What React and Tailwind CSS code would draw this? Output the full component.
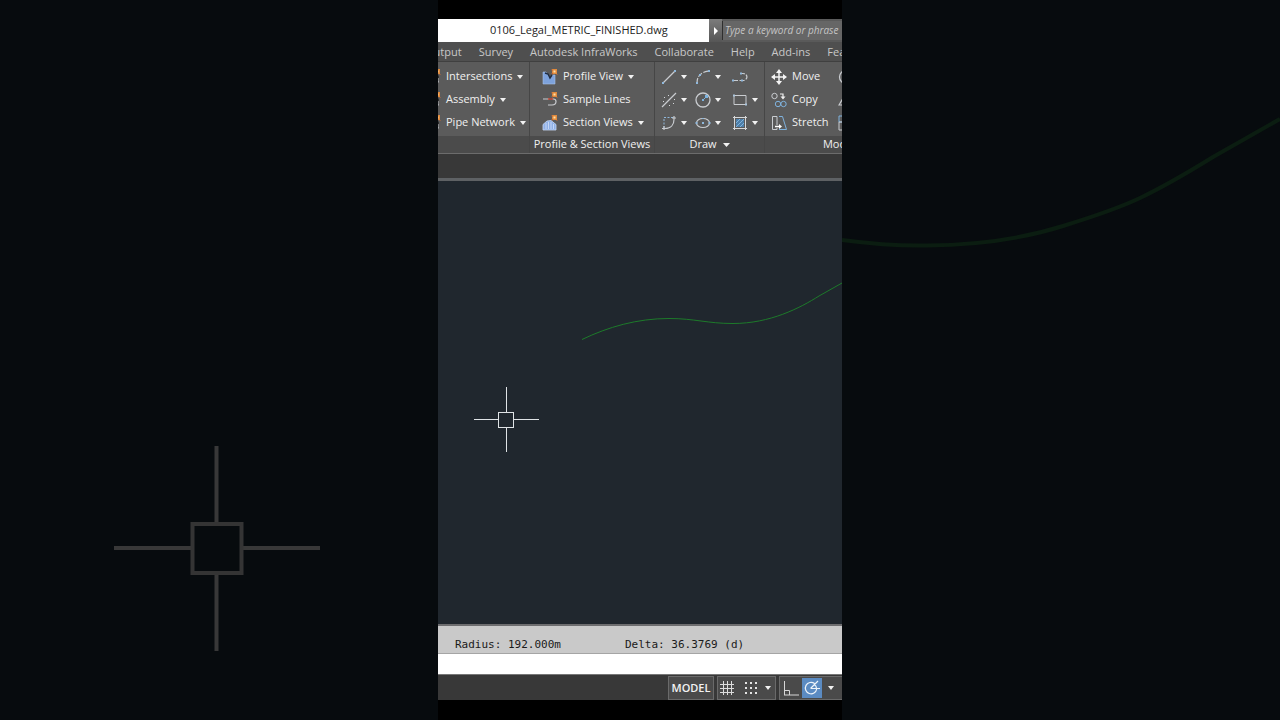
/**
 * Civil 3D ribbon and drawing area, shown as a portrait strip
 * over a dimmed, enlarged backdrop of the same drawing.
 */

import React from 'react';

const TABS = ['Output', 'Survey', 'Autodesk InfraWorks', 'Collaborate', 'Help', 'Add-ins', 'Featured Apps'];

function Caret({ className = 'w-1.5 h-1' }) {
  return (
    <svg viewBox="0 0 6 4" preserveAspectRatio="none" className={`shrink-0 ${className}`} aria-hidden="true">
      <path d="M0 0h6L3 4z" fill="#f2f2f2" />
    </svg>
  );
}

function Icon({ children, className = '' }) {
  return (
    <svg viewBox="0 0 16 16" className={`size-4 shrink-0 ${className}`} fill="none" stroke="#c9ccd0" aria-hidden="true">
      {children}
    </svg>
  );
}

// Orange "new object" spark in the corner of the create icons
function Spark() {
  return (
    <g stroke="none">
      <rect x="10" y="0" width="5" height="5" fill="#e08a3c" />
      <rect x="11.5" y="1.5" width="2" height="2" fill="#ffe0a8" />
      <path d="M9 4l2 0 0 2zM9 0l2 1-1 1zM15 5l1 1-2 0z" fill="#b9683a" />
    </g>
  );
}

const icons = {
  create: (
    <>
      <path d="M6 8h8M12 8v6" stroke="#2c2c2c" strokeWidth="3" />
      <path d="M6 13h8M13 9v4" />
      <Spark />
    </>
  ),
  profileView: (
    <>
      <path d="M1 3v12h12V6h-2L8 9 4 3z" fill="#7da2dc" stroke="#a9c2ea" strokeWidth=".6" />
      <path d="M3 4l3 1 2 4 2-3" stroke="#1f2b40" strokeWidth="1.400" />
      <Spark />
    </>
  ),
  sampleLines: (
    <>
      <path d="M1 7h6M6 13h4c3 0 4-2 4-3.500S13 7 11.500 7H10" strokeWidth="1.200" />
      <path d="M6 7h5" stroke="#c44a38" strokeWidth="1.500" />
      <Spark />
    </>
  ),
  sectionViews: (
    <>
      <path d="M1 15V9.500L5 6l4-.5 5 4V15z" fill="#8fb0e6" stroke="#c6d8f5" strokeWidth=".8" />
      <path d="M4 8v6M6.500 7v7M9 7v7M11.500 9v5" stroke="#dde8fa" strokeWidth=".7" />
      <Spark />
    </>
  ),
  line: (
    <>
      <path d="M2 14L14 2" strokeWidth="1.200" />
      <path d="M1 13h2v2H1zM13 1h2v2h-2z" fill="#8fb8dc" stroke="none" />
    </>
  ),
  arc: (
    <>
      <path d="M2 14C2 7 6 3 14 2" strokeWidth="1.200" strokeDasharray="5 1.500" />
      <path d="M1 13h2v2H1zM4 5h2v2H4zM13 1h2v2h-2z" fill="#8fb8dc" stroke="none" />
    </>
  ),
  polyline: (
    <>
      <path d="M1 11.500h10c5 0 5-7 0-7H9" strokeWidth="1.200" strokeDasharray="5 1.500" />
      <path d="M0 10.500h2v2H0zM9 10.500h2v2H9zM8 3.500h2v2H8z" fill="#8fb8dc" stroke="none" />
    </>
  ),
  xline: (
    <>
      <path d="M1 15L15 1" strokeWidth="1.200" />
      <path d="M3 5h1v1H3zM7 3h1v1H7zM2 9h1v1H2zM8 13h1v1H8zM12 11h1v1h-1zM13 7h1v1h-1z" fill="#d5d8dc" stroke="none" />
    </>
  ),
  circle: (
    <>
      <circle cx="8" cy="8" r="7" strokeWidth="1.300" />
      <path d="M8 8l4-4" stroke="#7db4e0" />
      <path d="M7 7h2v2H7zM10 3h3v3h-3z" fill="#7db4e0" stroke="none" />
    </>
  ),
  rectangle: (
    <>
      <path d="M2 3.500h12v9H2z" />
      <path d="M1 2.500h2v2H1zM13 11.500h2v2h-2z" fill="#a9c4dc" stroke="none" />
    </>
  ),
  spline: (
    <>
      <path d="M3 13V2.500h10" stroke="#8fb8dc" strokeDasharray="2 1.500" />
      <path d="M1 13.500h3c6 0 9-4 9-9V1M3 11v4M11 3h4" strokeWidth="1.200" />
    </>
  ),
  ellipse: (
    <>
      <ellipse cx="8" cy="8" rx="6.500" ry="4.500" strokeWidth="1.200" />
      <path d="M7 7h2v2H7zM0.500 7h2v2h-2zM13.500 7h2v2h-2zM7 3h2v1H7z" fill="#8fb8dc" stroke="none" />
    </>
  ),
  hatch: (
    <>
      <path d="M4 4h8v8H4z" fill="#4d7ea8" stroke="none" />
      <path d="M4 8l4-4M4 12l8-8M8 12l4-4" stroke="#8fc0ea" strokeWidth=".8" />
      <path d="M2.500 1v14M13.500 1v14M1 2.500h14M1 13.500h14" stroke="#d6d8da" />
    </>
  ),
  move: (
    <>
      <path d="M8 3v10M3 8h10" stroke="#f5f5f5" strokeWidth="1.500" />
      <path d="M8 0l3 4H5zM8 16l3-4H5zM0 8l4-3v6zM16 8l-4-3v6z" fill="#f5f5f5" stroke="none" />
    </>
  ),
  copy: (
    <>
      <circle cx="3.500" cy="4" r="2.700" />
      <path d="M9 2h3v3" stroke="#f0f0f0" strokeWidth="1.200" />
      <path d="M9.500 4.500h5L12 7.500z" fill="#f0f0f0" stroke="none" />
      <circle cx="7" cy="12" r="2.700" stroke="#7fb2dd" />
      <circle cx="12.500" cy="12" r="2.700" stroke="#7fb2dd" />
    </>
  ),
  stretch: (
    <>
      <path d="M6 10V1.500H1.500v13H6V13" />
      <path d="M8 1.500h3.500l4 13H8" stroke="#7fb2dd" />
      <path d="M4 11.500h5" stroke="#fff" strokeWidth="1.500" />
      <path d="M8 9l3 2.500L8 14z" fill="#fff" stroke="none" />
    </>
  ),
  rotate: <circle cx="8" cy="8" r="6.500" strokeWidth="1.300" />,
  mirror: <path d="M1 13L7 3v10z" strokeWidth="1.200" />,
  scale: (
    <>
      <path d="M1 1h12v6H1z" stroke="#7fb2dd" />
      <path d="M1 7h7v8H1z" />
    </>
  ),
};

const createRows = ['Intersections', 'Assembly', 'Pipe Network'];

const viewRows = [
  { icon: 'profileView', label: 'Profile View', menu: true },
  { icon: 'sampleLines', label: 'Sample Lines' },
  { icon: 'sectionViews', label: 'Section Views', menu: true },
];

const drawTools = [
  { icon: 'line', label: 'Line', menu: true },
  { icon: 'arc', label: 'Arc', menu: true },
  { icon: 'polyline', label: 'Polyline' },
  { icon: 'xline', label: 'Construction line', menu: true },
  { icon: 'circle', label: 'Circle', menu: true },
  { icon: 'rectangle', label: 'Rectangle', menu: true },
  { icon: 'spline', label: 'Spline', menu: true },
  { icon: 'ellipse', label: 'Ellipse', menu: true },
  { icon: 'hatch', label: 'Hatch', menu: true },
];

const modifyRows = [
  { icon: 'move', label: 'Move', next: 'rotate', nextLabel: 'Rotate' },
  { icon: 'copy', label: 'Copy', next: 'mirror', nextLabel: 'Mirror' },
  { icon: 'stretch', label: 'Stretch', next: 'scale', nextLabel: 'Scale' },
];

function Panel({ title, children, className = '' }) {
  return (
    <section className={`flex shrink-0 flex-col border-r border-[#464646] ${className}`}>
      <div className="flex-1 pt-[3px] pb-0.5">{children}</div>
      <div className="flex h-[17px] items-center justify-center gap-1.5 whitespace-nowrap bg-[#4b4b4b]">{title}</div>
    </section>
  );
}

function RibbonButton({ icon, label, menu }) {
  return (
    <button type="button" className="flex h-[23px] items-center gap-[5px] whitespace-nowrap">
      <Icon>{icons[icon]}</Icon>
      {label}
      {menu && <Caret />}
    </button>
  );
}

function Ribbon() {
  return (
    <div className="flex h-[91px] overflow-hidden bg-[#5b5b5b] text-[#f0f0f0]">
      <Panel className="w-[92px] overflow-hidden">
        <div className="-ml-[13px]">
          {createRows.map((label) => (
            <RibbonButton key={label} icon="create" label={label} menu />
          ))}
        </div>
      </Panel>
      <Panel title="Profile & Section Views" className="w-[125px]">
        <div className="pl-3">
          {viewRows.map((row) => (
            <RibbonButton key={row.label} {...row} />
          ))}
        </div>
      </Panel>
      <Panel title={<>Draw <Caret className="h-1 w-[7px]" /></>} className="w-[110px]">
        <div className="grid grid-cols-[34px_37px_1fr] pl-1.5">
          {drawTools.map((tool) => (
            <button key={tool.icon} type="button" aria-label={tool.label} className="flex h-[23px] items-center gap-1">
              <Icon>{icons[tool.icon]}</Icon>
              {tool.menu && <Caret />}
            </button>
          ))}
        </div>
      </Panel>
      <Panel title="Modify" className="w-[152px]">
        <div className="pl-1.5">
          {modifyRows.map((row) => (
            <div key={row.label} className="flex">
              <div className="w-[67px]">
                <RibbonButton icon={row.icon} label={row.label} />
              </div>
              <button type="button" aria-label={row.nextLabel} className="flex h-[23px] items-center">
                <Icon>{icons[row.next]}</Icon>
              </button>
            </div>
          ))}
        </div>
      </Panel>
    </div>
  );
}

function TitleBar() {
  return (
    <header className="flex h-[23px] bg-[#5a5a5a]">
      <h1 className="flex w-[271px] shrink-0 items-center bg-white pl-[52px] text-[11px] text-[#1c1c1c]">
        0106_Legal_METRIC_FINISHED.dwg
      </h1>
      <button
        type="button"
        aria-label="Expand search"
        className="flex w-[13px] shrink-0 items-center justify-center bg-linear-to-b from-[#7c7c7c] to-[#565656]"
      >
        <svg viewBox="0 0 4 8" className="h-2 w-1" aria-hidden="true">
          <path d="M0 0v8l4-4z" fill="#fff" />
        </svg>
      </button>
      <input
        type="text"
        aria-label="Search"
        placeholder="Type a keyword or phrase"
        className="my-0.5 min-w-0 flex-1 border-l border-[#2e2e2e] bg-[#666666] pl-0.5 text-[10px] italic text-white placeholder:text-[#c4c4c4] focus:outline-none"
      />
    </header>
  );
}

function DrawingArea() {
  return (
    <main className="relative flex-1 bg-[#20272e]">
      <svg viewBox="0 0 404 443" className="absolute inset-0 h-full w-full" fill="none" aria-label="Alignment">
        <path
          d="M144 158.500C170 146 199 137.500 231 137.500C257 137.500 269 142.500 295 142.500C332 142.500 362 127 381 115L404 102"
          stroke="#1d7a2a"
        />
        <g stroke="#dfe3e6" shapeRendering="crispEdges">
          <path d="M36 238.500h25M76 238.500h25M68.500 206v25M68.500 246v25" />
          <rect x="60.500" y="231.500" width="15" height="15" />
        </g>
      </svg>
    </main>
  );
}

function StatusBar() {
  return (
    <footer className="flex h-[26px] justify-end gap-[3px] border-t border-[#777777] bg-[#383838] pt-px text-[#f2f2f2]">
      <button type="button" className="w-[46px] border border-[#6a6a6a] bg-[#4a4a4a] font-semibold leading-[22px]">
        MODEL
      </button>
      <div className="flex w-[59px] items-center border border-[#6a6a6a] bg-[#4a4a4a] pl-px">
        <button type="button" aria-label="Grid" className="mr-2">
          <Icon>
            <path d="M4.500 1v14M8.500 1v14M12.500 1v14M1 4.500h14M1 8.500h14M1 12.500h14" stroke="#dcdcdc" />
          </Icon>
        </button>
        <button type="button" aria-label="Snap" className="mr-1.5">
          <Icon>
            <path d="M2 3h12M2 8h12M2 13h12" stroke="#e4e4e4" strokeWidth="2" strokeDasharray="2 3" />
          </Icon>
        </button>
        <button type="button" aria-label="Snap settings">
          <Caret />
        </button>
      </div>
      <div className="flex w-[63px] items-center border-y border-l border-[#6a6a6a] bg-[#4a4a4a]">
        <button type="button" aria-label="Ortho" className="flex w-[22px] justify-center">
          <Icon>
            <path d="M1.500 1v14M1 15h15M2 10.500h4.500V15" stroke="#d6d6d6" />
          </Icon>
        </button>
        <button type="button" aria-label="Polar tracking" className="flex h-5 w-5 items-center justify-center bg-[#5b8bc2]">
          <Icon>
            <path d="M10.500 3.500A5.700 5.700 0 1 0 12.700 9M6.500 8.500H16M6.500 8.500L14 1M10.500 4.500c1.500 1 2 2.500 2 4" stroke="#eef4fa" strokeWidth="1.200" />
          </Icon>
        </button>
        <button type="button" aria-label="Polar settings" className="ml-1.5">
          <Caret />
        </button>
      </div>
    </footer>
  );
}

export default function App() {
  return (
    <div className="flex min-h-screen bg-[#070b0e] font-['Open_Sans',sans-serif] text-[11px]">
      <div className="relative flex-1">
        <svg viewBox="0 0 438 720" className="absolute inset-0 h-full w-full" fill="none" stroke="#383838" strokeWidth="4" aria-hidden="true">
          <path d="M114 548h78M242 548h78M216.500 446v77M216.500 573v78" />
          <rect x="192.500" y="524" width="49" height="49" stroke="#343434" />
        </svg>
      </div>

      <div className="flex w-[404px] shrink-0 flex-col overflow-hidden bg-black pt-[19px] pb-5">
        <TitleBar />
        <nav className="flex h-[19px] items-center gap-[17px] overflow-hidden whitespace-nowrap bg-[#4f4f4f] pt-0.5 text-[#c8c8c8]">
          {TABS.map((tab) => (
            <a key={tab} href="#" className="first:-ml-[13px]">
              {tab}
            </a>
          ))}
        </nav>
        <div className="h-px bg-[#404040]" />
        <Ribbon />
        <div className="h-[25px] border-t border-[#6c6c6c] bg-[#383838]" />
        <div className="h-[3px] bg-[#5e6164]" />
        <DrawingArea />
        <div className="grid h-[30px] grid-cols-[170px_1fr] items-end border-t-2 border-b border-t-[#6d6d6f] border-b-[#a5a5a5] bg-[#c9c9c9] pl-[17px] font-['DejaVu_Sans_Mono',monospace] text-[#1a1a1a]">
          <span>Radius: 192.000m</span>
          <span>Delta: 36.3769 (d)</span>
        </div>
        <input type="text" aria-label="Command" className="h-5 w-full bg-white px-2 focus:outline-none" />
        <StatusBar />
      </div>

      <div className="relative flex-1">
        <svg viewBox="0 0 438 720" className="absolute inset-0 h-full w-full" fill="none" aria-hidden="true">
          <path
            d="M0 240C30 244 58 246 85 245.500C135 245 180 239 221 226C250 217 275 209 298 198C325 185 350 170 371 157L438 119"
            stroke="#0b1d11"
            strokeWidth="4"
          />
        </svg>
      </div>
    </div>
  );
}
